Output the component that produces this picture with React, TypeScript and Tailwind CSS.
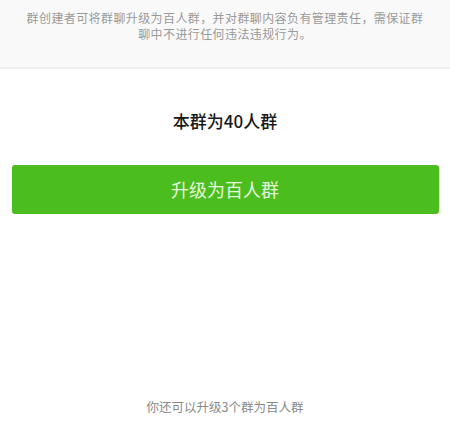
export default function App() {
  return (
    <div
      className="w-[450px] h-[422px] bg-white flex flex-col overflow-hidden"
      style={{ fontFamily: '"Noto Sans CJK SC", "Noto Sans", sans-serif' }}
    >
      {/* 说明 */}
      <div className="h-[69px] bg-[#f9f9f9] border-b-2 border-[#eeeeee] pt-[10px] text-[12px] leading-[16px] text-[#9a9a9a] text-center whitespace-nowrap">
        <div className="tracking-[0.4px]">群创建者可将群聊升级为百人群，并对群聊内容负有管理责任，需保证群</div>
        <div className="tracking-[0.4px]">聊中不进行任何违法违规行为。</div>
      </div>

      <div className="flex-1 flex flex-col items-center">
        <div className="mt-[40px] text-[17px] leading-[24px] font-medium text-[#1a1a1a]">本群为40人群</div>

        <button className="mt-[32px] w-[427px] h-[49px] rounded-[3px] bg-[#4bbd1f] text-[18px] text-[#e6f6dd] flex items-center justify-center">
          升级为百人群
        </button>

        <div className="mt-auto mb-[6px] text-[12.5px] leading-[18px] text-[#8a8a8a]">你还可以升级3个群为百人群</div>
      </div>
    </div>
  );
}
